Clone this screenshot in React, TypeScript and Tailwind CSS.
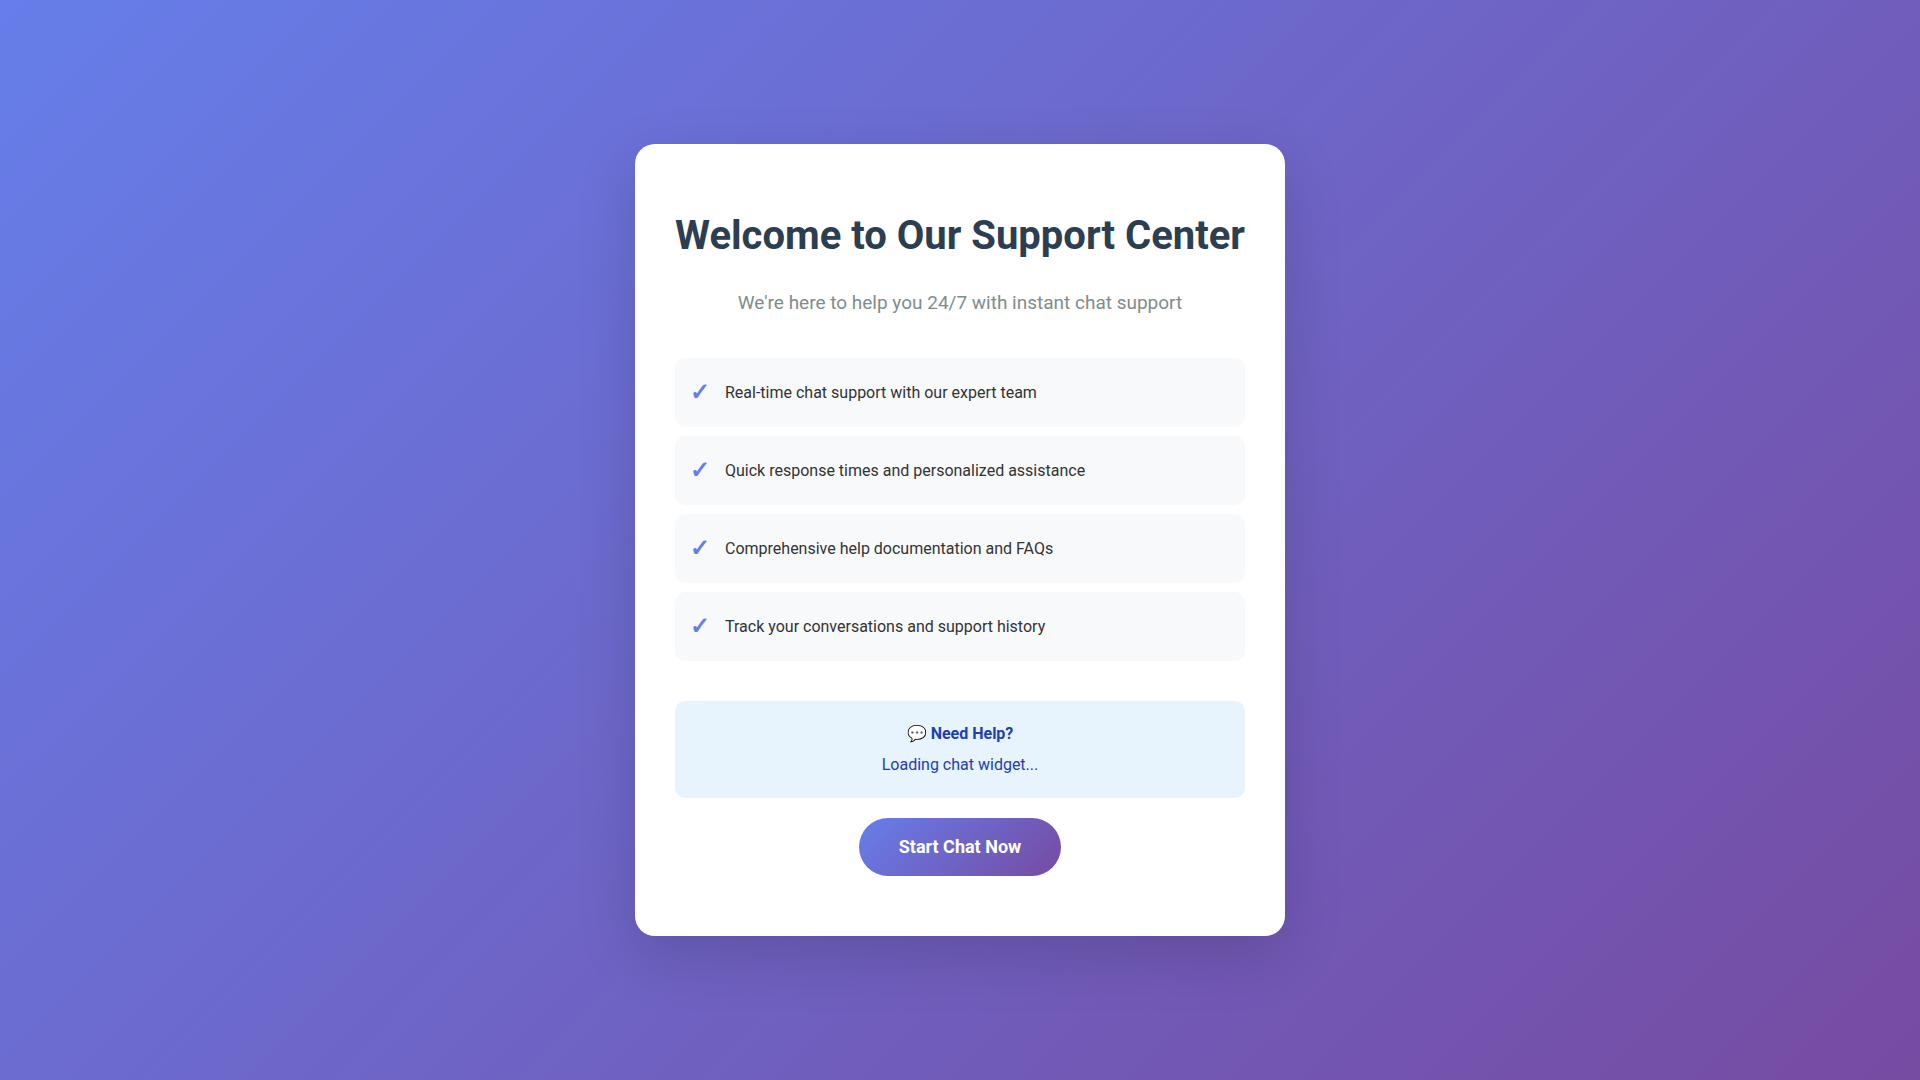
import React from "react";

const features: string[] = [
  "Real-time chat support with our expert team",
  "Quick response times and personalized assistance",
  "Comprehensive help documentation and FAQs",
  "Track your conversations and support history",
];

const FeatureList: React.FC = () => (
  <ul className="flex flex-col gap-[9px] mb-10">
    {features.map((feature) => (
      <li
        key={feature}
        className="flex items-center gap-[15px] p-[15px] bg-[#f8f9fb] rounded-[10px]"
      >
        <span className="text-2xl leading-[39px] font-bold text-[#667eea]">
          ✓
        </span>
        <span>{feature}</span>
      </li>
    ))}
  </ul>
);

const App: React.FC = () => {
  return (
    <div className="flex items-center justify-center min-h-screen bg-[linear-gradient(135deg,#667eea_0%,#764ba2_100%)] font-[Roboto,sans-serif] text-base leading-[26px] text-[#333333]">
      <main className="bg-white rounded-[20px] px-10 py-[60px] shadow-[0_20px_60px_rgba(0,0,0,0.15)]">
        <h1 className="text-[40px] leading-[64px] font-bold text-center text-[#2c3e50] mb-5">
          Welcome to Our Support Center
        </h1>
        <p className="text-[19px] leading-[30px] text-center text-[#7f8c8d] mb-10">
          We're here to help you 24/7 with instant chat support
        </p>
        <FeatureList />
        <div className="flex flex-col gap-[5px] p-5 mb-5 rounded-[10px] bg-[#e7f3fd] text-center text-[#1e40af]">
          <strong className="font-bold">💬 Need Help?</strong>
          <p>Loading chat widget...</p>
        </div>
        <div className="flex justify-center">
          <button
            type="button"
            className="px-10 py-[15px] rounded-full bg-[linear-gradient(135deg,#667eea_0%,#764ba2_100%)] text-lg font-bold text-white cursor-pointer"
          >
            Start Chat Now
          </button>
        </div>
      </main>
    </div>
  );
};

export default App;
